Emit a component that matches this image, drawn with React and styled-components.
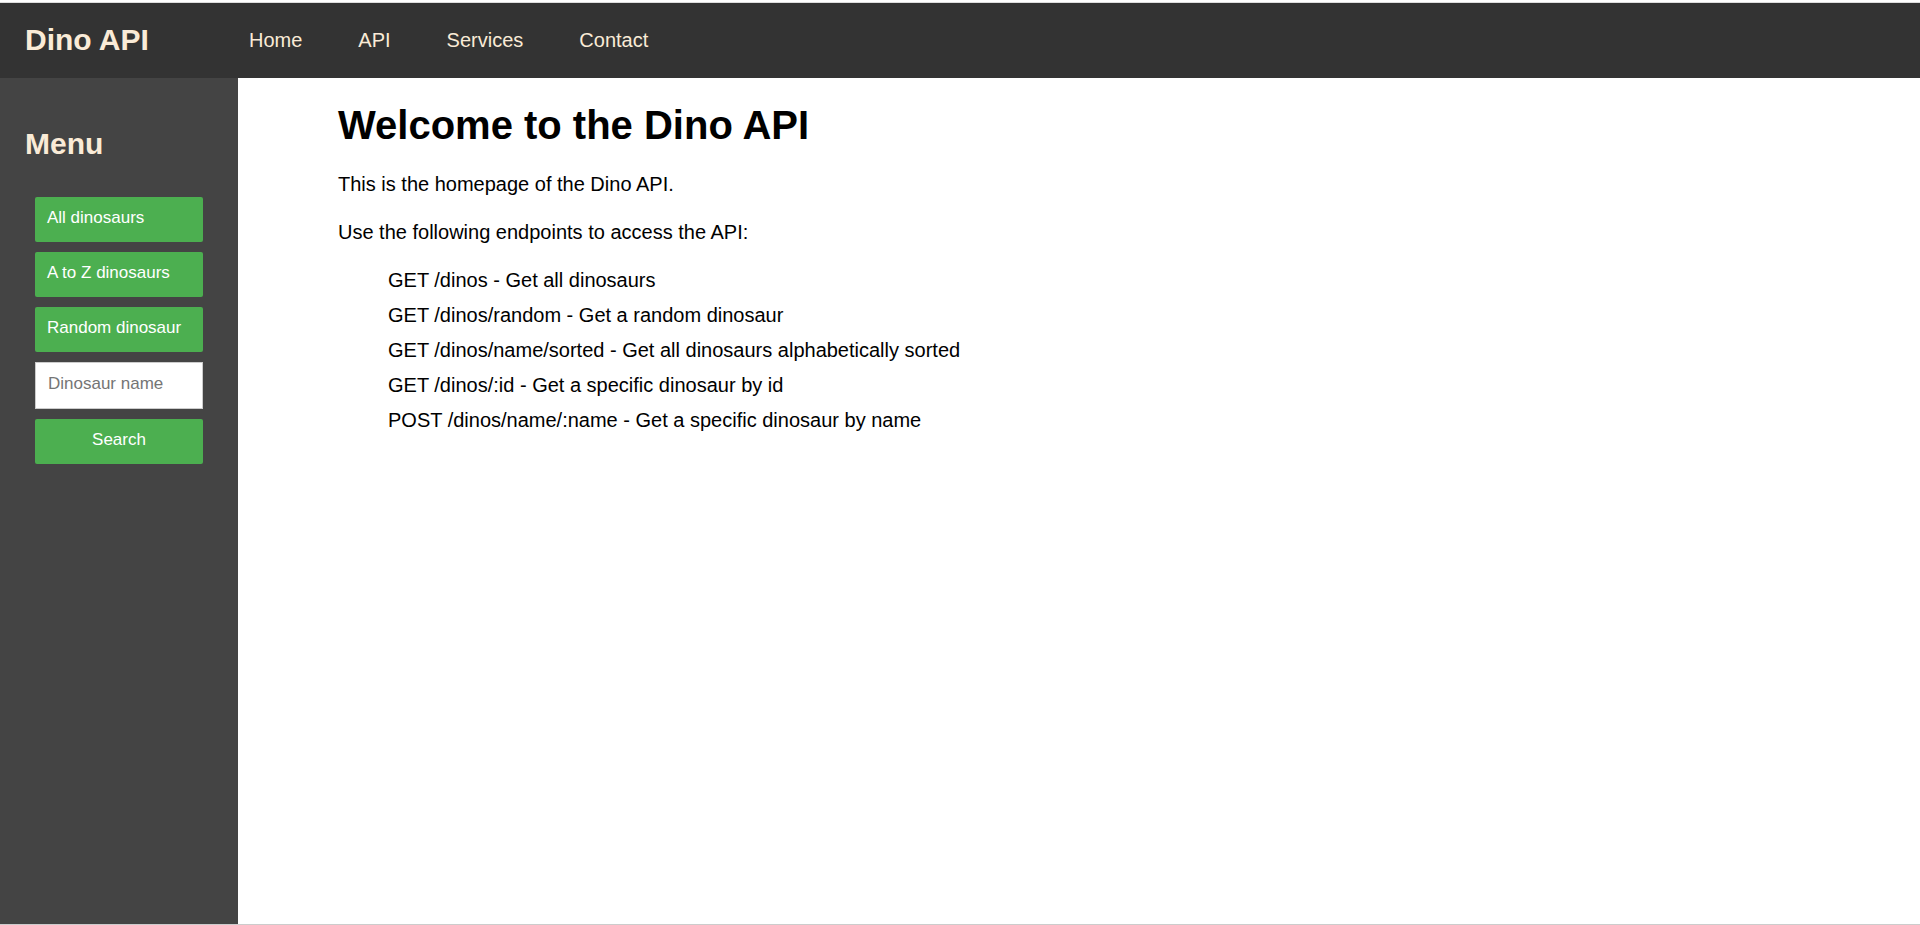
import React from "react";
import styled, { createGlobalStyle } from "styled-components";

const GlobalStyle = createGlobalStyle`
  * { box-sizing: border-box; }
  body {
    margin: 0;
    background: #fff;
    color: #000;
    font-family: Arial, "Liberation Sans", sans-serif;
    font-size: 20px;
  }
`;

const Page = styled.div`
  display: flex;
  flex-direction: column;
  min-height: 100vh;
  padding-top: 2px;
  border-bottom: 1px solid #ccc;
`;

const Header = styled.header`
  display: flex;
  align-items: center;
  height: 76px;
  padding: 0 0 2px 25px;
  border-top: 1px solid #ddd;
  background: #333;
  color: antiquewhite;
`;

const Brand = styled.div`
  width: 196px;
  font-size: 30px;
  font-weight: bold;
`;

const Nav = styled.nav`
  display: flex;
`;

const NavLink = styled.a`
  padding: 0 28px;
  color: antiquewhite;
  line-height: 24px;
  text-decoration: none;
`;

const Body = styled.div`
  display: flex;
  flex: 1;
`;

const Sidebar = styled.aside`
  flex: none;
  width: 238px;
  padding: 48px 35px 0;
  background: #444;
`;

const MenuTitle = styled.h2`
  margin: 0 0 36px -10px;
  color: antiquewhite;
  font-size: 30px;
  line-height: 35px;
`;

const MenuForm = styled.form`
  display: flex;
  flex-direction: column;
  gap: 10px;
`;

const MenuButton = styled.button`
  height: 45px;
  padding: 0 12px 3px;
  border: 0;
  border-radius: 2px;
  background: #4caf50;
  color: #fff;
  font: 17px Arial, "Liberation Sans", sans-serif;
  text-align: ${({ $align }) => $align || "left"};
  white-space: nowrap;
  cursor: pointer;
`;

const NameInput = styled.input`
  width: 100%;
  height: 47px;
  padding: 0 12px 3px;
  border: 1px solid #ccc;
  border-radius: 0;
  font: 17px Arial, "Liberation Sans", sans-serif;
`;

const Main = styled.main`
  flex: 1;
  padding: 24px 100px;
`;

const Title = styled.h1`
  margin: 0 0 24px;
  font-size: 40px;
  line-height: 46px;
`;

const Text = styled.p`
  margin: 0 0 24px;
  line-height: 24px;
`;

const Endpoints = styled.ul`
  display: flex;
  flex-direction: column;
  gap: 11px;
  margin: 0;
  padding-left: 50px;
  list-style: none;
`;

const Endpoint = styled.li`
  line-height: 24px;
`;

const links = ["Home", "API", "Services", "Contact"];
const actions = ["All dinosaurs", "A to Z dinosaurs", "Random dinosaur"];
const endpoints = [
  "GET /dinos - Get all dinosaurs",
  "GET /dinos/random - Get a random dinosaur",
  "GET /dinos/name/sorted - Get all dinosaurs alphabetically sorted",
  "GET /dinos/:id - Get a specific dinosaur by id",
  "POST /dinos/name/:name - Get a specific dinosaur by name",
];

export default function App() {
  return (
    <Page>
      <GlobalStyle />
      <Header>
        <Brand>Dino API</Brand>
        <Nav>
          {links.map((l) => (
            <NavLink key={l} href={"#" + l.toLowerCase()}>{l}</NavLink>
          ))}
        </Nav>
      </Header>
      <Body>
        <Sidebar>
          <MenuTitle>Menu</MenuTitle>
          <MenuForm onSubmit={(e) => e.preventDefault()}>
            {actions.map((a) => (
              <MenuButton key={a} type="button">{a}</MenuButton>
            ))}
            <NameInput type="text" name="name" placeholder="Dinosaur name" aria-label="Dinosaur name" />
            <MenuButton type="submit" $align="center">Search</MenuButton>
          </MenuForm>
        </Sidebar>
        <Main>
          <Title>Welcome to the Dino API</Title>
          <Text>This is the homepage of the Dino API.</Text>
          <Text>Use the following endpoints to access the API:</Text>
          <Endpoints>
            {endpoints.map((e) => (
              <Endpoint key={e}>{e}</Endpoint>
            ))}
          </Endpoints>
        </Main>
      </Body>
    </Page>
  );
}
